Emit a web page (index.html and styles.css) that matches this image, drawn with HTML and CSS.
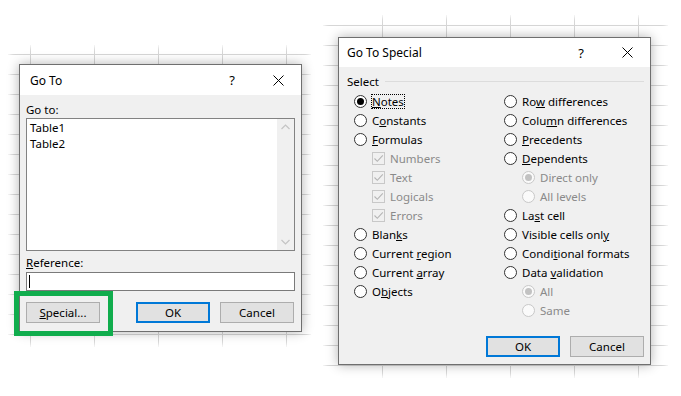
FILE: index.html
```html
<!DOCTYPE html>
<html>
<head>
  <title>Go To and Go To Special</title>
  <link rel="stylesheet" href="styles.css">
</head>
<body>
  <div class="page">

    <div class="sheet sheet-left">
      <div class="dialog dialog-goto">
        <div class="titlebar">
          <span class="title">Go To</span>
          <span class="tb-btn help">?</span>
          <span class="tb-btn close">
            <svg width="11" height="11" viewBox="0 0 11 11"><path d="M0.5 0.5 L10.5 10.5 M10.5 0.5 L0.5 10.5" stroke="#000" stroke-width="1" fill="none"/></svg>
          </span>
        </div>
        <div class="goto-body">
          <div class="label">Go to:</div>
          <div class="listbox">
            <div class="list-items">
              <div>Table1</div>
              <div>Table2</div>
            </div>
            <div class="scrollbar">
              <svg width="17" height="17" viewBox="0 0 17 17"><path d="M4.5 10 L8.5 6 L12.5 10" stroke="#c4c4c4" stroke-width="1.2" fill="none"/></svg>
              <svg width="17" height="17" viewBox="0 0 17 17"><path d="M4.5 7 L8.5 11 L12.5 7" stroke="#c4c4c4" stroke-width="1.2" fill="none"/></svg>
            </div>
          </div>
          <div class="label ref-label"><u>R</u>eference:</div>
          <div class="textbox"><span class="caret"></span></div>
          <div class="button-row">
            <button class="btn"><u>S</u>pecial...</button>
            <span class="spacer"></span>
            <button class="btn btn-default">OK</button>
            <button class="btn">Cancel</button>
          </div>
        </div>
        <div class="highlight"></div>
      </div>
    </div>

    <div class="sheet sheet-right">
      <div class="dialog dialog-special">
        <div class="titlebar">
          <span class="title">Go To Special</span>
          <span class="tb-btn help">?</span>
          <span class="tb-btn close">
            <svg width="11" height="11" viewBox="0 0 11 11"><path d="M0.5 0.5 L10.5 10.5 M10.5 0.5 L0.5 10.5" stroke="#000" stroke-width="1" fill="none"/></svg>
          </span>
        </div>
        <div class="special-body">
          <div class="group-head">
            <span>Select</span>
            <span class="group-line"></span>
          </div>
          <div class="columns">
            <div class="col col-left">
              <div class="row"><span class="radio on"></span><span class="focus"><u>N</u>otes</span></div>
              <div class="row"><span class="radio"></span><span>C<u>o</u>nstants</span></div>
              <div class="row"><span class="radio"></span><span><u>F</u>ormulas</span></div>
              <div class="row sub disabled"><span class="check"><svg width="11" height="11" viewBox="0 0 11 11"><path d="M1.5 5.5 L4.3 8.3 L9.8 2.3" stroke="#b4b4b4" stroke-width="1.1" fill="none"/></svg></span><span>Numbers</span></div>
              <div class="row sub disabled"><span class="check"><svg width="11" height="11" viewBox="0 0 11 11"><path d="M1.5 5.5 L4.3 8.3 L9.8 2.3" stroke="#b4b4b4" stroke-width="1.1" fill="none"/></svg></span><span>Text</span></div>
              <div class="row sub disabled"><span class="check"><svg width="11" height="11" viewBox="0 0 11 11"><path d="M1.5 5.5 L4.3 8.3 L9.8 2.3" stroke="#b4b4b4" stroke-width="1.1" fill="none"/></svg></span><span>Logicals</span></div>
              <div class="row sub disabled"><span class="check"><svg width="11" height="11" viewBox="0 0 11 11"><path d="M1.5 5.5 L4.3 8.3 L9.8 2.3" stroke="#b4b4b4" stroke-width="1.1" fill="none"/></svg></span><span>Errors</span></div>
              <div class="row"><span class="radio"></span><span>Blan<u>k</u>s</span></div>
              <div class="row"><span class="radio"></span><span>Current <u>r</u>egion</span></div>
              <div class="row"><span class="radio"></span><span>Current <u>a</u>rray</span></div>
              <div class="row"><span class="radio"></span><span>O<u>b</u>jects</span></div>
            </div>
            <div class="col col-right">
              <div class="row"><span class="radio"></span><span>Ro<u>w</u> differences</span></div>
              <div class="row"><span class="radio"></span><span>Colu<u>m</u>n differences</span></div>
              <div class="row"><span class="radio"></span><span><u>P</u>recedents</span></div>
              <div class="row"><span class="radio"></span><span><u>D</u>ependents</span></div>
              <div class="row sub disabled"><span class="radio on"></span><span>Direct only</span></div>
              <div class="row sub disabled"><span class="radio"></span><span>All levels</span></div>
              <div class="row"><span class="radio"></span><span>La<u>s</u>t cell</span></div>
              <div class="row"><span class="radio"></span><span>Visible cells onl<u>y</u></span></div>
              <div class="row"><span class="radio"></span><span>Condi<u>t</u>ional formats</span></div>
              <div class="row"><span class="radio"></span><span>Data <u>v</u>alidation</span></div>
              <div class="row sub disabled"><span class="radio on"></span><span>All</span></div>
              <div class="row sub disabled"><span class="radio"></span><span>Same</span></div>
            </div>
          </div>
          <div class="button-row special-buttons">
            <button class="btn btn-default">OK</button>
            <button class="btn">Cancel</button>
          </div>
        </div>
      </div>
    </div>

  </div>
</body>
</html>
```

FILE: styles.css
```css
body {
  margin: 0;
  background: #fff;
  font-family: "Noto Sans", "Segoe UI", sans-serif;
  font-size: 11.5px;
  color: #000;
}
.page {
  display: flex;
  align-items: flex-start;
  padding-left: 8px;
  gap: 12px;
}

/* spreadsheet behind the dialogs */
.sheet {
  box-sizing: border-box;
  background-color: #fff;
  background-image:
    linear-gradient(to right, #d6d6d6 1px, transparent 1px),
    linear-gradient(to bottom, #d6d6d6 1px, transparent 1px);
  background-size: 64px 20px;
  box-shadow: inset 0 0 5px 2px #fff;
}
.sheet-left {
  width: 303px;
  height: 302px;
  margin-top: 45px;
  padding: 19px 0 0 11px;
  background-position: 22px 9px;
}
.sheet-right {
  width: 345px;
  height: 363px;
  margin-top: 15px;
  padding: 22px 0 0 15px;
  background-position: 59px 10px;
}

/* dialog frame */
.dialog {
  position: relative;
  box-sizing: border-box;
  background: #f0f0f0;
  border: 1px solid #6f6f6f;
  box-shadow: 0 0 11px rgba(0, 0, 0, 0.3);
}
.dialog-goto {
  width: 283px;
  height: 268px;
}
.dialog-special {
  width: 313px;
  height: 328px;
}
.titlebar {
  display: flex;
  align-items: center;
  height: 30px;
  background: #fff;
  padding-left: 10px;
}
.dialog-special .titlebar {
  height: 29px;
  padding-left: 8px;
}
.title {
  flex: 1;
  font-size: 12px;
}
.tb-btn {
  width: 46px;
  height: 100%;
  display: flex;
  align-items: center;
  justify-content: center;
}
.help {
  font-size: 13px;
}

/* Go To body */
.goto-body {
  padding: 8px 6px 0 6px;
}
.label {
  line-height: 14px;
}
.listbox {
  display: flex;
  height: 133px;
  margin-top: 1px;
  box-sizing: border-box;
  border: 1px solid #828282;
  background: #fff;
}
.list-items {
  flex: 1;
  padding: 1px 3px;
  line-height: 16px;
}
.scrollbar {
  width: 17px;
  background: #f0f0f0;
  display: flex;
  flex-direction: column;
  justify-content: space-between;
}
.ref-label {
  margin-top: 5px;
}
.textbox {
  height: 19px;
  margin-top: 2px;
  box-sizing: border-box;
  border: 1px solid #7a7a7a;
  background: #fff;
  display: flex;
  align-items: center;
  padding-left: 2px;
}
.caret {
  width: 1px;
  height: 13px;
  background: #000;
}
.button-row {
  display: flex;
  gap: 10px;
  margin-top: 11px;
  padding-right: 1px;
}
.spacer {
  flex: 1;
}
.btn {
  width: 74px;
  height: 21px;
  box-sizing: border-box;
  border: 1px solid #adadad;
  background: #e1e1e1;
  font-family: inherit;
  font-size: 11.5px;
  color: #000;
  padding: 0;
}
.btn-default {
  border: 2px solid #0078d7;
}

/* annotation around the Special button */
.highlight {
  position: absolute;
  left: -6px;
  top: 226px;
  width: 99px;
  height: 45px;
  box-sizing: border-box;
  border: 5px solid #10ad4d;
}

/* Go To Special body */
.special-body {
  padding: 7px 6px 0 8px;
}
.group-head {
  display: flex;
  align-items: center;
  height: 14px;
  gap: 6px;
}
.group-line {
  flex: 1;
  height: 1px;
  background: #dcdcdc;
}
.columns {
  display: flex;
  margin-top: 4px;
  padding-left: 7px;
  height: 228px;
}
.col-left {
  width: 150px;
}
.row {
  display: flex;
  align-items: center;
  height: 19px;
  gap: 5px;
}
.row.sub {
  padding-left: 18px;
}
.row.disabled {
  color: #8a8a8a;
}
.radio {
  flex: none;
  width: 13px;
  height: 13px;
  box-sizing: border-box;
  border: 1px solid #333;
  border-radius: 50%;
  background: #fff;
  display: flex;
  align-items: center;
  justify-content: center;
}
.radio.on::after {
  content: "";
  width: 7px;
  height: 7px;
  border-radius: 50%;
  background: #000;
}
.disabled .radio {
  border-color: #c8c8c8;
  background: #fafafa;
}
.disabled .radio.on::after {
  background: #c2c2c2;
}
.check {
  flex: none;
  width: 13px;
  height: 13px;
  box-sizing: border-box;
  border: 1px solid #c8c8c8;
  display: flex;
  align-items: center;
  justify-content: center;
}
.focus {
  border: 1px dotted #000;
  line-height: 13px;
  margin-left: -1px;
}
.special-buttons {
  justify-content: flex-end;
  margin-top: 16px;
  padding-right: 0;
}
```
